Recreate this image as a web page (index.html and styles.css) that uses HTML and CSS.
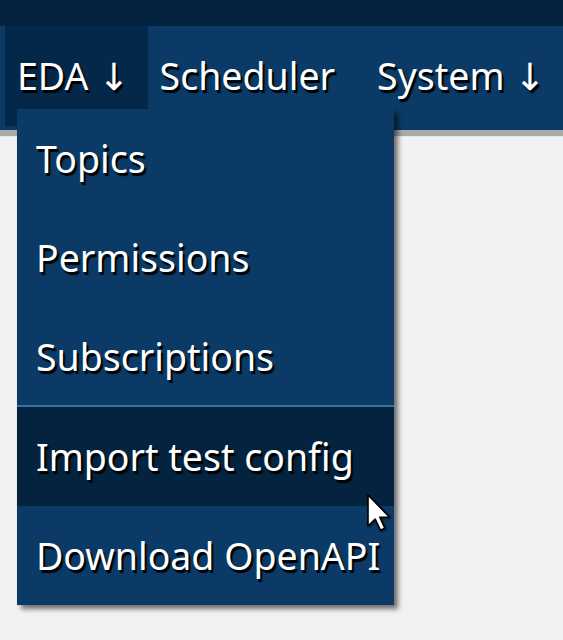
FILE: index.html
```html
<!DOCTYPE html>
<html>
<head>
<meta charset="utf-8">
<link rel="stylesheet" href="styles.css">
</head>
<body>
<div class="topbar"></div>
<nav class="nav">
  <div class="item item-open">EDA ↓
    <div class="dropdown">
      <div class="dd-item">Topics</div>
      <div class="dd-item">Permissions</div>
      <div class="dd-item">Subscriptions</div>
      <div class="dd-item dd-sep dd-hover">Import test config</div>
      <div class="dd-item">Download OpenAPI</div>
    </div>
  </div>
  <div class="item">Scheduler</div>
  <div class="item item-sys">System ↓</div>
</nav>
<svg class="cursor" width="30" height="42" viewBox="0 0 15 21">
  <defs>
    <filter id="sh" x="-30%" y="-30%" width="160%" height="160%">
      <feGaussianBlur in="SourceAlpha" stdDeviation="0.6"/>
      <feOffset dx="0.6" dy="0.6" result="b"/>
      <feComponentTransfer><feFuncA type="linear" slope="0.6"/></feComponentTransfer>
      <feMerge><feMergeNode/><feMergeNode in="SourceGraphic"/></feMerge>
    </filter>
  </defs>
  <path filter="url(#sh)" d="M1 1 L1 16.5 L4.6 13 L7.2 18.6 L9.4 17.6 L6.9 12.1 L11.8 12.1 Z" fill="#fff" stroke="#000" stroke-width="0.8" stroke-linejoin="round"/>
</svg>
</body>
</html>
```

FILE: styles.css
```css
html, body {
  margin: 0;
  padding: 0;
}
body {
  background: #f2f2f2;
  font-family: "Noto Sans", "DejaVu Sans", sans-serif;
  height: 640px;
  overflow: hidden;
  position: relative;
}
.topbar {
  height: 26px;
  background: #03223f;
}
.nav {
  display: flex;
  background: #0a3a65;
  padding: 0 0 4px 5px;
  box-shadow: 0 6px 1px #aaaaaa;
  position: relative;
  z-index: 1;
}
.item {
  position: relative;
  color: #fff;
  font-size: 37.5px;
  line-height: 100px;
  height: 100px;
  padding: 0 12px;
  text-shadow: 2px 3px 1px #000;
  white-space: nowrap;
}
.item-open {
  background: #04284a;
  padding-right: 18px;
}
.item-sys {
  margin-left: 18px;
}
.dropdown {
  position: absolute;
  left: 12px;
  top: 83px;
  width: 377px;
  background: #0a3a65;
  box-shadow: 4px 4px 5px rgba(0, 0, 0, 0.55);
  z-index: 2;
}
.dd-item {
  line-height: 98.8px;
  height: 97.8px;
  padding: 1px 0 0 19px;
}
.dd-sep {
  border-top: 2px solid #3a6f9c;
}
.dd-hover {
  background: #03233f;
}
.cursor {
  position: absolute;
  left: 366px;
  top: 493px;
  z-index: 5;
}
```
